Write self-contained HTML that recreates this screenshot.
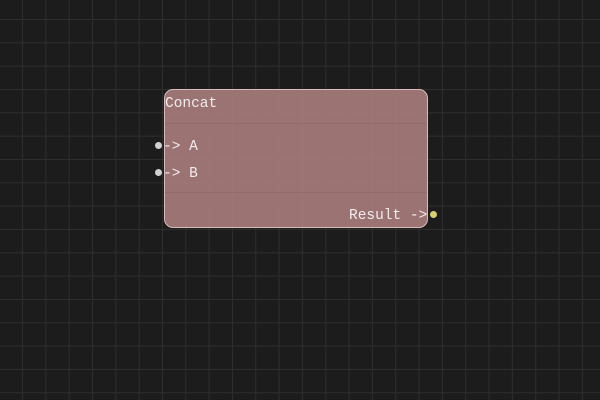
<!DOCTYPE html>
<html><head><style>
html,body{margin:0;padding:0;}
body{width:600px;height:400px;overflow:hidden;position:relative;background-color:#1c1c1c;
background-image:linear-gradient(to right,#2e2e2e 1px,transparent 1px),linear-gradient(to bottom,#2e2e2e 1px,transparent 1px);
background-size:23.33px 23.33px;background-position:22px 19px;}
.node{position:absolute;left:164px;top:89px;width:262px;height:137px;border:1.5px solid #d8bcbc;border-radius:9px;background:rgba(170,125,125,0.9);box-sizing:content-box;}
.t{position:absolute;font-family:"Liberation Mono",monospace;font-size:14.5px;color:#f2ecec;line-height:1;white-space:pre;}
.ln{position:absolute;left:0;width:100%;height:1px;background:rgba(130,95,95,0.35);}
.dot{position:absolute;width:7px;height:7px;border-radius:50%;}
</style></head><body>
<div class="node">
<div class="ln" style="top:33px"></div>
<div class="ln" style="top:102px"></div>
</div>
<div class="t" style="left:165px;top:97px">Concat</div>
<div class="t" style="left:163px;top:140px">-&gt; A</div>
<div class="t" style="left:163px;top:167px">-&gt; B</div>
<div class="t" style="left:349px;top:209px">Result -&gt;</div>
<div class="dot" style="left:155px;top:142px;background:#d0d0d0"></div>
<div class="dot" style="left:155px;top:169px;background:#d0d0d0"></div>
<div class="dot" style="left:430px;top:211px;background:#d8d070"></div>
</body></html>
